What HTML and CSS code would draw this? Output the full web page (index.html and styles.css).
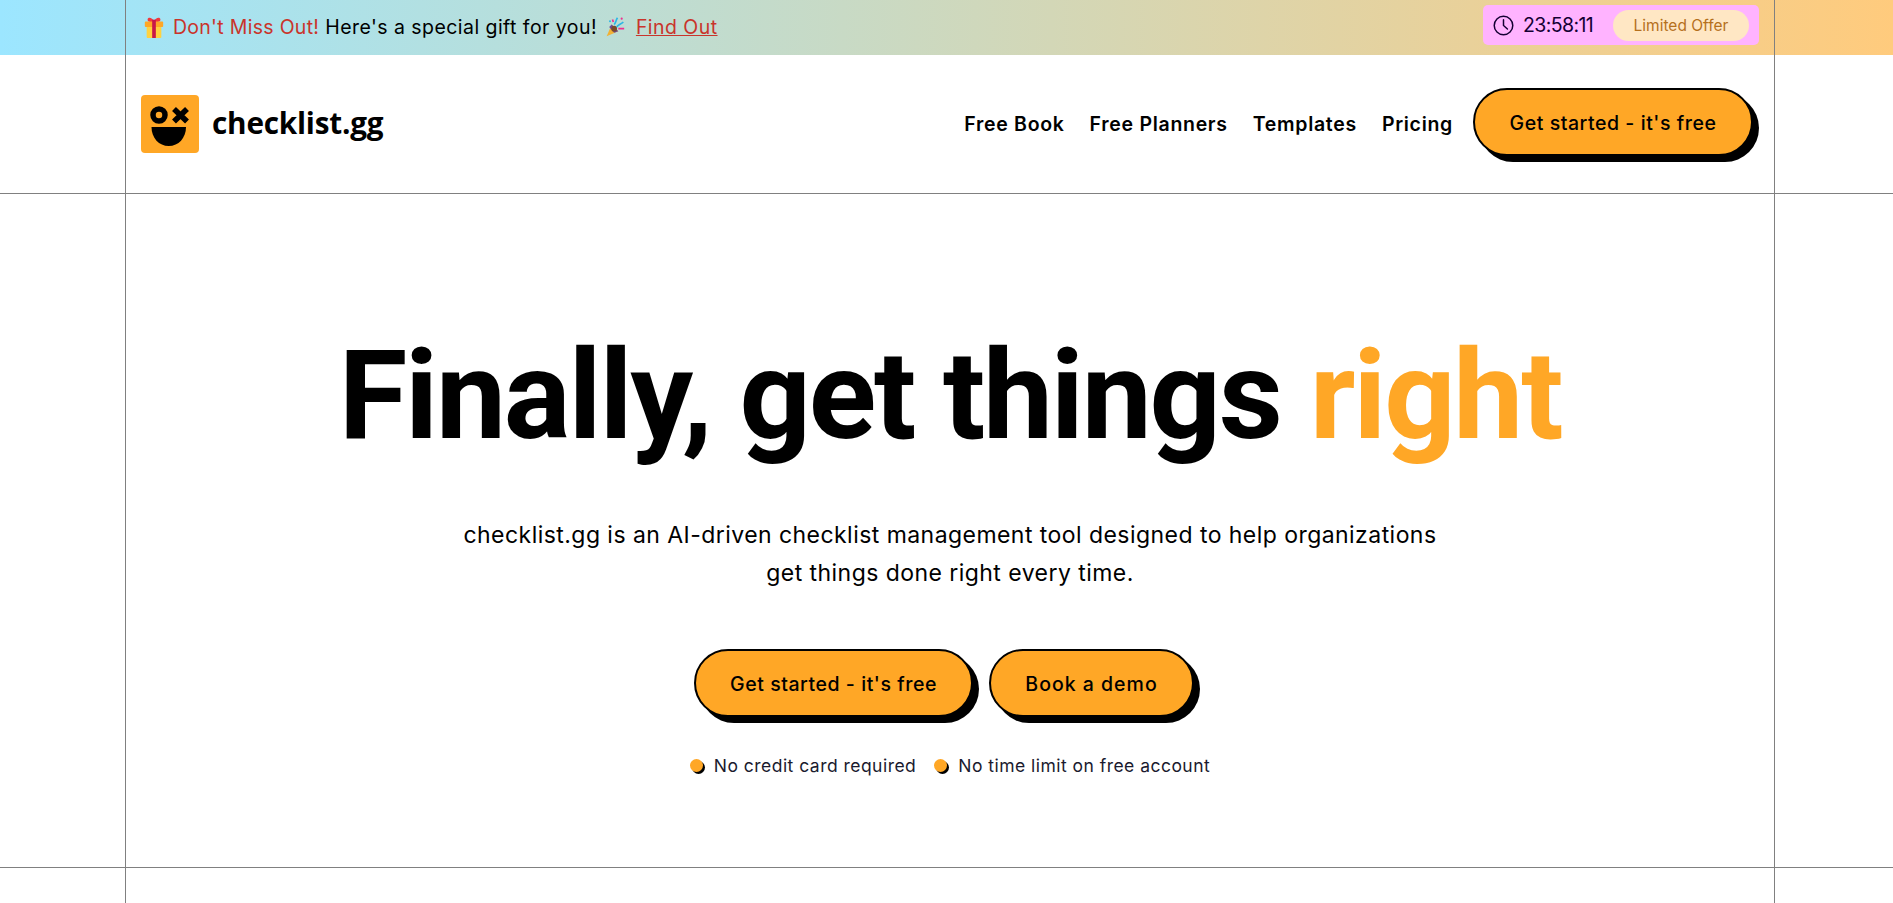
FILE: index.html
```html
<!DOCTYPE html>
<html lang="en">
<head>
    <meta charset="UTF-8">
    <meta name="viewport" content="width=device-width, initial-scale=1.0">
    <title>checklist.gg</title>
    <link rel="stylesheet" href="styles.css">
</head>
<body>
    <div class="promo">
        <div class="wrap promo-inner">
            <p class="promo-text">
                <svg class="emoji" viewBox="0 0 20 24" aria-hidden="true">
                    <path d="M10 6C8 1 3 1 3 4c0 2 3 3 7 3zM10 6c2-5 7-5 7-2 0 2-3 3-7 3z" fill="#f0383c"/>
                    <rect x="2" y="11" width="16" height="13" rx="1" fill="#ffd23f"/>
                    <rect x="0" y="6" width="20" height="6" rx="1" fill="#ffa726"/>
                    <rect x="8" y="4" width="4" height="20" fill="#c8174a"/>
                </svg>
                <span class="red miss">Don't Miss Out!</span> Here's a special gift for you!
                <svg class="emoji emoji-party" viewBox="0 0 24 24" aria-hidden="true">
                    <path d="M8 9l8 8-14 6z" fill="#f2b134"/>
                    <path d="M8 9l8 8-5 2-6-7z" fill="#6a4a9c"/>
                    <circle cx="11" cy="14" r="3.4" fill="#7a4a2a"/>
                    <path d="M11 9c2-2 2-5 4-8M14 12c2-3 5-3 8-6" stroke="#2bb6e6" stroke-width="2" fill="none"/>
                    <path d="M16 14h7M9 3l1 3" stroke="#ee2f8f" stroke-width="2" fill="none"/>
                    <circle cx="20" cy="2" r="1.3" fill="#ee2f8f"/>
                    <circle cx="6" cy="5" r="1.2" fill="#2bb6e6"/>
                </svg>
                <a href="#" class="red find-out">Find Out</a>
            </p>
            <div class="timer">
                <svg class="clock" viewBox="0 0 24 24" fill="none" stroke="#140033" stroke-width="1.7" stroke-linecap="round" aria-hidden="true">
                    <circle cx="12" cy="12" r="10.6"/>
                    <path d="M12 5.5V12l4.5 4"/>
                </svg>
                <span class="time">23:58:11</span>
                <span class="limited">Limited Offer</span>
            </div>
        </div>
    </div>

    <header class="site-head">
        <div class="wrap head-inner">
            <a href="#" class="logo">
                <svg class="logo-mark" viewBox="0 0 58 58" aria-hidden="true">
                    <rect width="58" height="58" rx="4" fill="#ffa726"/>
                    <circle cx="18" cy="20" r="6" fill="none" stroke="#000" stroke-width="5.5"/>
                    <path d="M33 14l13 12.500M46 14L33 26.500" stroke="#000" stroke-width="5.6"/>
                    <path d="M10.500 32H45c0 11-7.500 19-17.250 19S10.500 43 10.500 32z" fill="#000"/>
                </svg>
                <span class="logo-name">checklist.gg</span>
            </a>
            <nav class="nav">
                <a href="#">Free Book</a>
                <a href="#">Free Planners</a>
                <a href="#">Templates</a>
                <a href="#">Pricing</a>
                <a href="#" class="btn btn-nav">Get started - it's free</a>
            </nav>
        </div>
    </header>

    <section class="hero">
        <div class="wrap hero-inner">
            <h1>Finally, get things <span class="orange">right</span></h1>
            <p class="lead">checklist.gg is an AI-driven checklist management tool designed to help organizations<br>get things done right every time.</p>
            <div class="actions">
                <a href="#" class="btn btn-start">Get started - it's free</a>
                <a href="#" class="btn btn-demo">Book a demo</a>
            </div>
            <ul class="notes">
                <li>No credit card required</li>
                <li>No time limit on free account</li>
            </ul>
        </div>
    </section>

    <div class="wrap rest"></div>
</body>
</html>
```

FILE: styles.css
```css
* {
    box-sizing: border-box;
}

body {
    margin: 0;
    font-family: "Inter", "Liberation Sans", sans-serif;
    color: #000;
    background: #fff;
}

a {
    color: inherit;
    text-decoration: none;
}

/* centre column with the thin side rules */
.wrap {
    width: 1650px;
    margin-left: 125px;
    padding: 0 15px;
    border-left: 1px solid #808080;
    border-right: 1px solid #808080;
}

/* promo bar */
.promo {
    height: 55px;
    background: linear-gradient(90deg, #9ce6ff 0%, #ffcb7d 100%);
}

.promo-inner {
    height: 55px;
    display: flex;
    align-items: center;
    justify-content: space-between;
}

.promo-text {
    margin: 0 0 2px 3px;
    font-size: 19.500px;
    letter-spacing: 0.45px;
    color: #000;
}

.emoji {
    width: 20px;
    height: 22px;
    margin-right: 3px;
    vertical-align: -4px;
}

.emoji-party {
    margin-left: 2px;
    margin-right: 5px;
}

.red {
    color: #c9342b;
}

.miss {
    letter-spacing: 0.3px;
}

.find-out {
    text-decoration: underline;
}

.timer {
    width: 276px;
    height: 40px;
    margin-top: -5px;
    padding: 0 10px;
    display: flex;
    align-items: center;
    background: #ffb3ff;
    border-radius: 5px;
}

.clock {
    width: 21px;
    height: 21px;
    flex: none;
}

.time {
    margin-left: 9px;
    width: 90px;
    font-size: 19.500px;
    letter-spacing: -0.6px;
    color: #140033;
}

.limited {
    width: 136px;
    height: 31px;
    padding-top: 1px;
    border-radius: 16px;
    background: #ffe7c4;
    color: #b5701c;
    font-size: 15.500px;
    display: flex;
    align-items: center;
    justify-content: center;
}

/* header */
.site-head {
    border-bottom: 1px solid #808080;
}

.head-inner {
    height: 138px;
    display: flex;
    align-items: center;
    justify-content: space-between;
    padding-right: 21px;
}

.logo {
    display: flex;
    align-items: center;
    gap: 13px;
}

.logo-mark {
    width: 58px;
    height: 58px;
    flex: none;
}

.logo-name {
    margin-bottom: 4px;
    font-family: "Open Sans", sans-serif;
    font-weight: 700;
    font-size: 29.700px;
    letter-spacing: -0.2px;
}

.nav {
    display: flex;
    align-items: center;
    gap: 25px;
    font-size: 19.500px;
    font-weight: 600;
    letter-spacing: 0.7px;
}

.btn {
    display: inline-flex;
    align-items: center;
    justify-content: center;
    height: 68px;
    padding-top: 1px;
    border: 2px solid #000;
    border-radius: 34px;
    background: #ffa726;
    box-shadow: 6px 6px 0 #000;
    font-size: 19.500px;
    font-weight: 500;
    letter-spacing: 0.55px;
}

.btn-nav {
    width: 280px;
    margin-left: -5px;
    margin-bottom: 4px;
}

/* hero */
.hero {
    border-bottom: 1px solid #808080;
}

.hero-inner {
    height: 673px;
    padding-top: 138px;
    display: flex;
    flex-direction: column;
    align-items: center;
}

h1 {
    margin: 0;
    font-family: "Roboto", sans-serif;
    font-weight: 700;
    font-size: 125px;
    line-height: 128px;
    letter-spacing: -2.2px;
}

.orange {
    color: #ffa726;
}

.lead {
    margin: 56px 0 0;
    text-align: center;
    font-size: 23px;
    letter-spacing: 0.45px;
    line-height: 38px;
}

.actions {
    margin-top: 57px;
    margin-left: -12px;
    display: flex;
    gap: 16px;
}

.btn-start {
    width: 279px;
}

.btn-demo {
    width: 205px;
    letter-spacing: 1px;
}

.notes {
    list-style: none;
    margin: 38px 0 0;
    padding: 0;
    display: flex;
    gap: 18px;
    font-size: 17.500px;
    letter-spacing: 0.47px;
    color: #1a1a2e;
}

.notes li {
    display: flex;
    align-items: center;
    gap: 11px;
}

.notes li::before {
    content: "";
    width: 13px;
    height: 13px;
    border-radius: 50%;
    background: #ffa726;
    box-shadow: 2px 2px 0 #000;
}

.rest {
    height: 35px;
}
```
